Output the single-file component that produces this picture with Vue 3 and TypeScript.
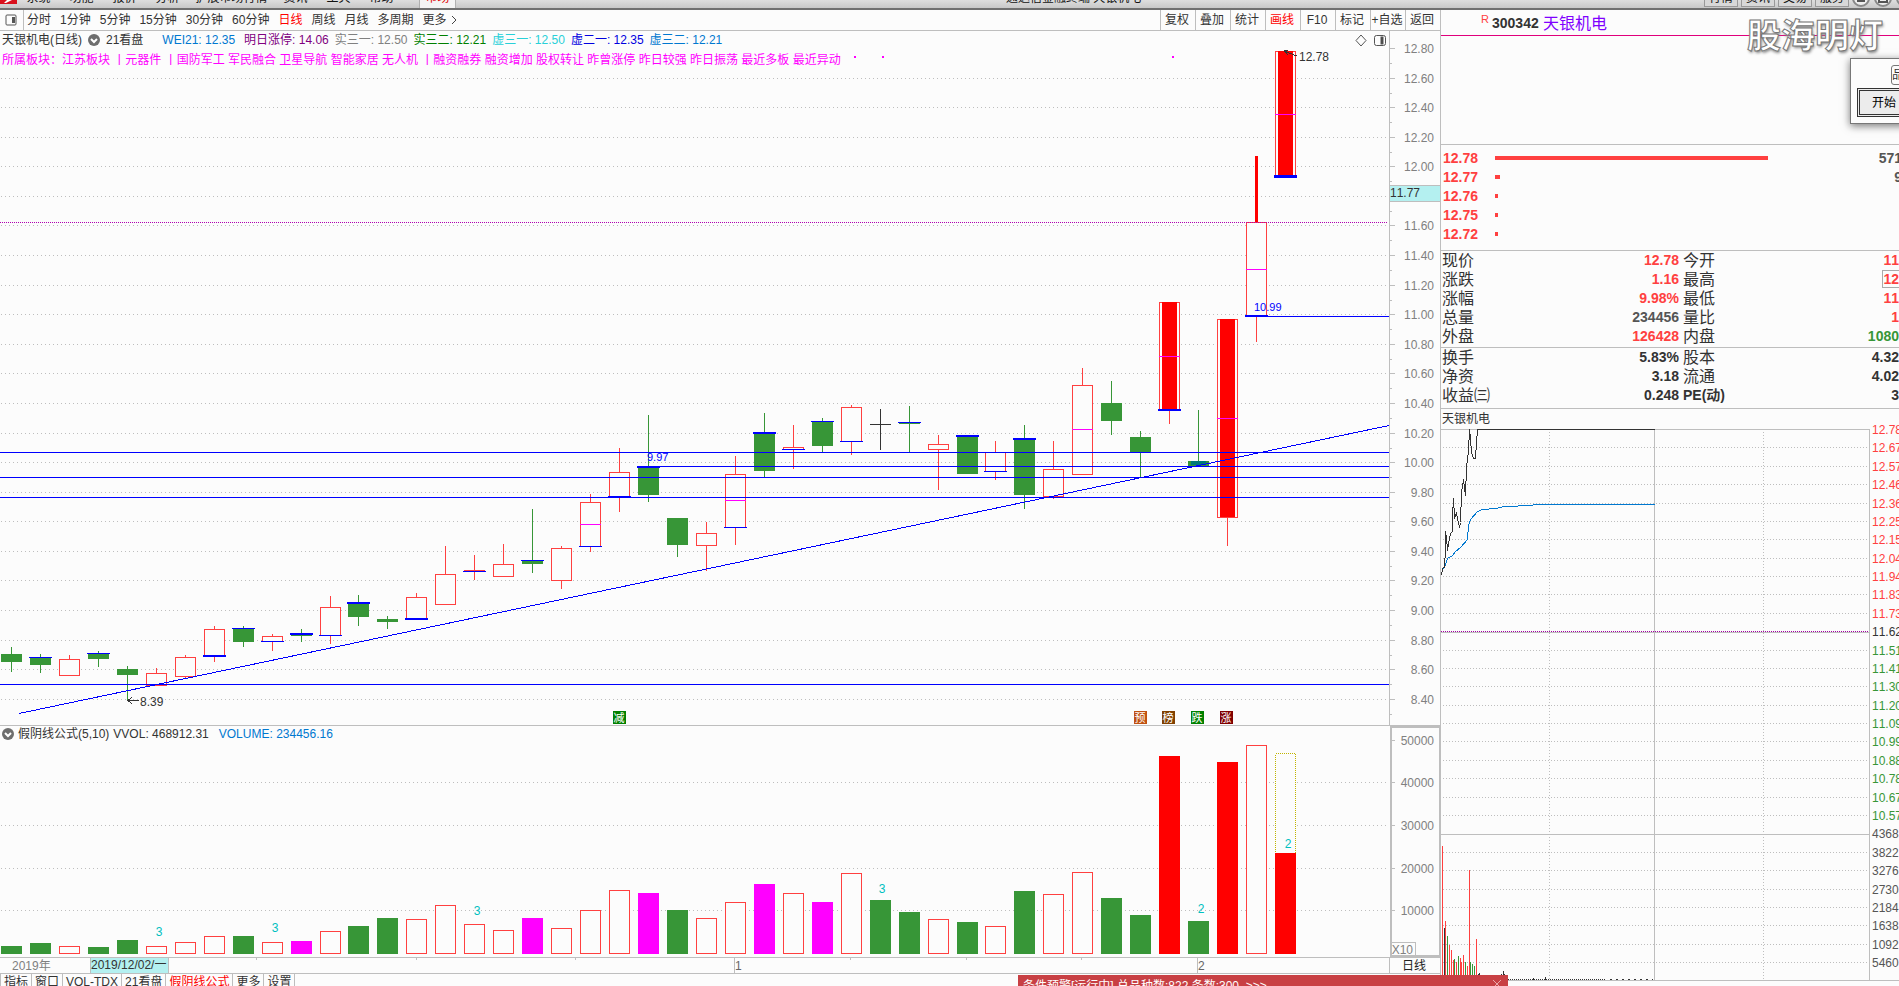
<script setup lang="ts">
type Kind = 'up' | 'down' | 'flat' | 'surge' | 'dip'
interface Mark { y: number; thick?: boolean }
interface Candle {
  kind: Kind
  top: number
  bottom: number
  high: number
  low: number
  mark?: Mark
  mid?: number
}

const STEP = 28.955
const left = (i: number) => Math.round(1 + STEP * i)

const c = (kind: Kind, top: number, bottom: number, high: number, low: number, mark?: Mark, mid?: number): Candle =>
  ({ kind, top, bottom, high, low, mark, mid })
const thin = (y: number): Mark => ({ y })
const thick = (y: number): Mark => ({ y, thick: true })

const candles: Candle[] = [
  c('down', 654, 662, 647, 672),
  c('down', 657, 665, 654, 673, thin(657)),
  c('up', 659, 675, 655, 675),
  c('down', 653, 659, 651, 667, thin(653)),
  c('down', 669, 675, 666, 700),
  c('up', 673, 685, 668, 685),
  c('up', 657, 676, 655, 678),
  c('up', 629, 656, 626, 662, thick(655)),
  c('down', 628, 642, 626, 647, thin(628)),
  c('up', 636, 641, 634, 651, thin(641)),
  c('down', 633, 636, 629, 642, thick(633)),
  c('up', 607, 635, 596, 644, thin(635)),
  c('down', 602, 617, 595, 626, thick(602)),
  c('down', 619, 622, 616, 629),
  c('up', 597, 619, 593, 619, thick(618)),
  c('up', 574, 604, 546, 604),
  c('up', 570, 571, 555, 580, thin(571)),
  c('up', 564, 576, 544, 576),
  c('down', 560, 564, 509, 573, thin(560)),
  c('up', 548, 580, 546, 589),
  c('up', 502, 546, 494, 552, thin(546), 524),
  c('up', 472, 497, 448, 512, thick(496)),
  c('down', 467, 495, 415, 502, thick(466)),
  c('down', 518, 545, 518, 557),
  c('up', 533, 545, 522, 571),
  c('up', 474, 527, 456, 545, thin(527), 500),
  c('down', 433, 471, 413, 477, thick(432)),
  c('up', 447, 449, 425, 469, thin(449)),
  c('down', 421, 446, 418, 452, thin(421)),
  c('up', 407, 441, 405, 455, thin(441)),
  c('flat', 424, 425, 409, 450),
  c('down', 422, 424, 406, 452, thin(422)),
  c('up', 444, 449, 435, 490),
  c('down', 435, 474, 435, 474, thick(435)),
  c('up', 452, 471, 441, 480, thin(471)),
  c('down', 439, 495, 425, 509, thick(438)),
  c('up', 469, 496, 441, 499),
  c('up', 385, 474, 368, 474, undefined, 429),
  c('down', 403, 421, 381, 435),
  c('down', 437, 453, 431, 477),
  c('surge', 302, 410, 302, 424, thick(409), 356),
  c('dip', 461, 466, 410, 466),
  c('surge', 319, 517, 319, 546, undefined, 418),
  c('up', 222, 316, 222, 342, thick(315), 269),
  c('surge', 51, 175, 51, 175, thick(175), 114),
]

const volumes: [string, number][] = [
  ['g', 946], ['g', 943], ['r', 946], ['g', 947], ['g', 940], ['r', 946], ['r', 942], ['r', 936],
  ['g', 936], ['r', 942], ['m', 941], ['r', 931], ['g', 926], ['g', 918], ['r', 919], ['r', 905],
  ['r', 924], ['r', 930], ['m', 918], ['r', 928], ['r', 910], ['r', 890], ['m', 893], ['g', 910],
  ['r', 918], ['r', 902], ['m', 884], ['r', 893], ['m', 902], ['r', 873], ['g', 900], ['g', 912],
  ['r', 919], ['g', 922], ['r', 926], ['g', 891], ['r', 894], ['r', 872], ['g', 898], ['g', 915],
  ['s', 756], ['g', 921], ['s', 762], ['r', 745], ['s', 853],
]

const counts = [
  { x: 159, y: 936, t: '3' }, { x: 275, y: 932, t: '3' }, { x: 477, y: 915, t: '3' },
  { x: 882, y: 893, t: '3' }, { x: 1201, y: 913, t: '2' }, { x: 1288, y: 848, t: '2' },
]

const prices = Array.from({ length: 23 }, (_, i) => ({
  label: (12.8 - i * 0.2).toFixed(2),
  y: Math.round(48 + i * 29.58),
}))
const volTicks = [
  { label: '50000', y: 740 }, { label: '40000', y: 782 }, { label: '30000', y: 825 },
  { label: '20000', y: 868 }, { label: '10000', y: 910 },
]
const support = [452, 477, 497, 684]

const badges = [
  { x: 613, t: '减', color: '#008000' },
  { x: 1134, t: '预', color: '#c05010' },
  { x: 1162, t: '榜', color: '#804000' },
  { x: 1191, t: '跌', color: '#008000' },
  { x: 1220, t: '涨', color: '#800000' },
]

const menus = ['系统', '功能', '报价', '分析', '扩展市场行情', '资讯', '工具', '帮助']
const services = ['行情', '资讯', '交易', '服务']
const periods = ['分时', '1分钟', '5分钟', '15分钟', '30分钟', '60分钟', '日线', '周线', '月线', '多周期']
const tools = ['复权', '叠加', '统计', '画线', 'F10', '标记', '+自选', '返回']
const tabs = ['指标', '窗口', 'VOL-TDX', '21看盘', '假阴线公式', '更多', '设置']

const indicators = [
  { t: 'WEI21: 12.35', cls: 'sky first' },
  { t: '明日涨停: 14.06', cls: 'plum' },
  { t: '实三一: 12.50', cls: 'gray' },
  { t: '实三二: 12.21', cls: 'green' },
  { t: '虚三一: 12.50', cls: 'cyan' },
  { t: '虚二一: 12.35', cls: 'blue' },
  { t: '虚三二: 12.21', cls: 'sky' },
]
const sectors = [
  '所属板块：江苏板块', '丨元器件', '丨国防军工', '军民融合', '卫星导航', '智能家居', '无人机', '丨融资融券',
  '融资增加', '股权转让', '昨曾涨停', '昨日较强', '昨日振荡', '最近多板', '最近异动',
].join(' ')

const book = [
  { p: '12.78', w: 273, v: '571' },
  { p: '12.77', w: 5, v: '9' },
  { p: '12.76', w: 3, v: '' },
  { p: '12.75', w: 3, v: '' },
  { p: '12.72', w: 3, v: '' },
]
interface Quote { a: string; av: string; ac: string; b: string; bv: string; bc: string; box?: boolean }
const quotes: Quote[][] = [
  [
    { a: '现价', av: '12.78', ac: 'red', b: '今开', bv: '11', bc: 'red' },
    { a: '涨跌', av: '1.16', ac: 'red', b: '最高', bv: '12', bc: 'red', box: true },
    { a: '涨幅', av: '9.98%', ac: 'red', b: '最低', bv: '11', bc: 'red' },
    { a: '总量', av: '234456', ac: 'dim', b: '量比', bv: '1', bc: 'red' },
    { a: '外盘', av: '126428', ac: 'red', b: '内盘', bv: '1080', bc: 'leaf' },
  ],
  [
    { a: '换手', av: '5.83%', ac: 'ink', b: '股本', bv: '4.32', bc: 'ink' },
    { a: '净资', av: '3.18', ac: 'ink', b: '流通', bv: '4.02', bc: 'ink' },
    { a: '收益㈢', av: '0.248', ac: 'ink', b: 'PE(动)', bv: '3', bc: 'ink' },
  ],
]

const dayLabels = [
  '12.78', '12.67', '12.57', '12.46', '12.36', '12.25', '12.15', '12.04', '11.94', '11.83', '11.73', '11.62',
  '11.51', '11.41', '11.30', '11.20', '11.09', '10.99', '10.88', '10.78', '10.67', '10.57',
  '4368', '3822', '3276', '2730', '2184', '1638', '1092', '5460',
].map((label, i) => ({
  label,
  y: Math.round(429 + i * 18.38),
  cls: i < 11 ? 'f-red' : i === 11 ? 'f-ink' : i < 22 ? 'f-leaf' : 'f-dim',
}))

const priceLine =
  '1441,575 1442,568 1443,567 1444,567 1445,548 1445,531 1446,537 1447,550 1449,538 1450,533 1452,531 1452,515 1453,498 1454,517 1456,513 1457,518 1459,527 1460,522 1461,492 1463,479 1464,487 1465,495 1466,467 1468,450 1469,429 1470,438 1471,452 1473,458 1475,458 1476,442 1477,429 1654,429'
const avgLine =
  '1442,569 1444,567 1447,558 1452,555 1455,551 1460,547 1467,539 1468,525 1470,519 1477,511 1482,509 1495,508 1504,506 1532,505 1533,504 1654,504'

const dayVol: [number, number, string][] = [
  [1442, 846, 'r'], [1444, 928, 'k'], [1445, 921, 'r'], [1447, 936, 'g'], [1449, 945, 'r'], [1451, 950, 'r'],
  [1453, 960, 'r'], [1454, 959, 'g'], [1456, 962, 'r'], [1458, 956, 'g'], [1460, 958, 'r'], [1461, 962, 'r'],
  [1463, 955, 'r'], [1465, 962, 'g'], [1467, 966, 'r'], [1469, 870, 'r'], [1470, 962, 'g'], [1472, 964, 'g'],
  [1474, 966, 'g'], [1476, 939, 'r'], [1478, 974, 'k'], [1479, 973, 'k'], [1501, 974, 'k'], [1503, 971, 'k'],
  [1504, 974, 'k'], [1533, 978, 'k'], [1545, 977, 'k'],
]
</script>

<template>
  <div class="app">
    <header class="topbar">
      <svg class="logo" viewBox="0 0 17 8" aria-hidden="true">
        <rect width="17" height="4" fill="#d8101c" />
        <path d="M4 3 L7 0 H12 L8 2 L6 3 Z" fill="#fff" />
      </svg>
      <nav class="menus">
        <button v-for="m in menus" :key="m" type="button" :class="{ wide: m.length > 2 }">{{ m }}</button>
        <button type="button" class="market">市场</button>
      </nav>
      <span class="apptitle">通达信金融终端 天银机电</span>
      <div class="services">
        <button v-for="s in services" :key="s" type="button">{{ s }}</button>
      </div>
      <svg class="winbtns" viewBox="0 0 50 8" aria-hidden="true">
        <g fill="#eee" stroke="#888" stroke-width="2">
          <circle cx="12" cy="-2" r="8" /><circle cx="34" cy="-2" r="8" /><circle cx="56" cy="-2" r="8" />
        </g>
        <path d="M8 1 H16 M30 -2 V2 H38 V-2" fill="none" stroke="#555" stroke-width="2" />
      </svg>
    </header>

    <main class="workspace">
      <section class="left">
        <div class="toolbar">
          <button type="button" class="panelbtn" aria-label="侧栏">
            <svg width="12" height="12" viewBox="0 0 12 12">
              <rect x="1" y="1" width="10" height="10" rx="1" fill="none" stroke="#555" />
              <rect x="7" y="3" width="3" height="6" fill="#555" />
            </svg>
          </button>
          <div class="periods">
            <button v-for="p in periods" :key="p" type="button" :class="{ on: p === '日线' }">{{ p }}</button>
            <button type="button" class="more">更多
              <svg width="6" height="10" viewBox="0 0 6 10"><path d="M1 1 L5 5 L1 9" fill="none" stroke="#444" /></svg>
            </button>
          </div>
          <div class="tools">
            <button v-for="t in tools" :key="t" type="button" :class="{ on: t === '画线' }">{{ t }}</button>
          </div>
        </div>

        <div class="pane">
          <div class="overlay">
            <div class="info">
              <span>天银机电(日线)</span>
              <svg class="drop" width="12" height="12" viewBox="0 0 12 12">
                <circle cx="6" cy="6" r="6" fill="#6e6e6e" />
                <path d="M3 5 L6 8 L9 5" fill="none" stroke="#fff" stroke-width="2" />
              </svg>
              <span class="formula">21看盘</span>
              <span v-for="n in indicators" :key="n.t" :class="n.cls">{{ n.t }}</span>
            </div>
            <div class="sectors">{{ sectors }}</div>
          </div>
          <svg class="chart" viewBox="0 31 1440 694" shape-rendering="crispEdges">
            <g class="grid">
              <line v-for="p in prices.slice(1)" :key="p.label" x1="1" x2="1387" :y1="p.y + 0.5" :y2="p.y + 0.5" />
            </g>
            <g fill="#ff00ff">
              <rect x="854" y="56" width="2" height="2" /><rect x="882" y="56" width="2" height="2" /><rect x="1172" y="56" width="2" height="2" />
            </g>

            <g v-for="(k, i) in candles" :key="i" :class="k.kind">
              <line v-if="k.high < k.top" class="wick" :x1="left(i) + 10.5" :x2="left(i) + 10.5" :y1="k.high" :y2="k.top" />
              <line v-if="k.low > k.bottom" class="wick" :x1="left(i) + 10.5" :x2="left(i) + 10.5" :y1="k.bottom" :y2="k.low" />
              <rect v-if="k.kind === 'up' || k.kind === 'surge'" class="body" :x="left(i) + 0.5" :y="k.top + 0.5" width="20" :height="k.bottom - k.top" />
              <rect v-else class="body" :x="left(i)" :y="k.top" width="21" :height="k.bottom - k.top" />
              <rect v-if="k.kind === 'surge'" :x="left(i) + 3" :y="k.top" width="15" :height="k.bottom - k.top" fill="#f00" />
              <rect v-if="k.kind === 'dip'" :x="left(i) + 3" :y="k.top" width="15" height="4" fill="#007878" />
              <rect v-if="k.mid" :x="left(i)" :y="k.mid" width="21" height="1" fill="#f0f" />
              <rect v-if="k.mark" :x="left(i) - 1" :y="k.mark.y" width="23" :height="k.mark.thick ? 2 : 1" fill="#00f" />
            </g>
            <rect x="1274" y="175" width="23" height="3" fill="#00f" />
            <rect x="1255" y="156" width="3" height="66" fill="#f00" />

            <line class="last" x1="0" x2="1388" y1="222.5" y2="222.5" />
            <g stroke="#00f">
              <line v-for="y in support" :key="y" x1="0" x2="1389" :y1="y + 0.5" :y2="y + 0.5" />
              <line x1="638" x2="1389" y1="466.5" y2="466.5" />
              <line x1="1245" x2="1389" y1="316.5" y2="316.5" />
              <line x1="19" x2="1389" y1="713.5" y2="425.5" />
            </g>

            <g class="note">
              <text x="1299" y="61">12.78</text>
              <text x="140" y="706">8.39</text>
            </g>
            <g class="level">
              <text x="1254" y="311">10.99</text>
              <text x="647" y="461">9.97</text>
            </g>
            <g fill="none" stroke="#333">
              <path d="M139 700.5 H128 M132 697 L128 700.5 L132 704" />
              <path d="M1297 56 L1284 51 M1288 50 H1284 L1288 55" />
            </g>

            <g v-for="b in badges" :key="b.t">
              <rect :x="b.x" y="711" width="13" height="13" :fill="b.color" />
              <text class="badge" :x="b.x + 6" y="722">{{ b.t }}</text>
            </g>

            <g class="axis">
              <line x1="1389.5" x2="1389.5" y1="31" y2="725" />
              <template v-for="p in prices" :key="p.label">
                <line x1="1390" x2="1395" :y1="p.y + 0.5" :y2="p.y + 0.5" />
                <line x1="1390" x2="1392" :y1="p.y + 15.5" :y2="p.y + 15.5" />
                <text v-if="p.label !== '11.80'" x="1434" :y="p.y + 5">{{ p.label }}</text>
              </template>
              <rect x="1389.5" y="185.5" width="51" height="16" fill="#b4f0f0" />
            </g>
            <text class="cursor" x="1390" y="197">11.77</text>
            <g fill="none" stroke="#555" shape-rendering="auto">
              <path d="M1361 35 L1366 40.5 L1361 46 L1356 40.5 Z" />
              <rect x="1374.5" y="35.5" width="11" height="10" rx="2" />
              <rect x="1381" y="37" width="2" height="7" fill="#444" />
            </g>
          </svg>
        </div>

        <div class="pane vol">
          <div class="overlay info">
            <svg class="drop" width="12" height="12" viewBox="0 0 12 12">
              <circle cx="6" cy="6" r="6" fill="#6e6e6e" />
              <path d="M3 5 L6 8 L9 5" fill="none" stroke="#fff" stroke-width="2" />
            </svg>
            <span>假阴线公式(5,10)</span>
            <span class="vvol">VVOL: 468912.31</span>
            <span class="sky">VOLUME: 234456.16</span>
          </div>
          <svg class="chart" viewBox="0 726 1440 231" shape-rendering="crispEdges">
            <g class="grid">
              <line v-for="t in volTicks.slice(1)" :key="t.label" x1="1" x2="1387" :y1="t.y + 0.5" :y2="t.y + 0.5" />
            </g>
            <rect x="1275.5" y="753.5" width="20" height="100" fill="#fcfcfc" stroke="#c0b400" stroke-dasharray="1 1" />
            <template v-for="([k, y], i) in volumes" :key="i">
              <rect v-if="k === 'r'" :x="left(i) + 0.5" :y="y + 0.5" width="20" :height="953 - y" fill="#fcfcfc" stroke="#ff4040" />
              <rect v-else :class="'v-' + k" :x="left(i)" :y="y" width="21" :height="954 - y" />
            </template>
            <text v-for="n in counts" :key="n.x" class="count" :x="n.x" :y="n.y">{{ n.t }}</text>
            <g class="axis">
              <rect x="1391" y="727" width="49" height="229" fill="none" stroke-width="2" />
              <template v-for="t in volTicks" :key="t.label">
                <line x1="1390" x2="1395" :y1="t.y + 0.5" :y2="t.y + 0.5" />
                <line x1="1390" x2="1392" :y1="t.y + 21.5" :y2="t.y + 21.5" />
                <text x="1434" :y="t.y + 5">{{ t.label }}</text>
              </template>
              <rect x="1391.5" y="942.5" width="24" height="13" fill="none" />
              <text x="1413" y="954">X10</text>
            </g>
          </svg>
        </div>

        <svg class="chart dates" viewBox="0 957 1440 17" shape-rendering="crispEdges">
          <g stroke="#bebebe">
            <line x1="0" x2="1440" y1="957.5" y2="957.5" />
            <line x1="0" x2="1440" y1="973.5" y2="973.5" />
            <line x1="1389.5" x2="1389.5" y1="957" y2="973" />
            <line x1="734.5" x2="734.5" y1="957" y2="973" />
            <line x1="1197.5" x2="1197.5" y1="957" y2="973" />
            <line v-for="x in [256, 416, 575, 850, 966, 1081]" :key="x" :x1="x + 0.5" :x2="x + 0.5" y1="958" y2="960" />
            <rect x="90.5" y="957.5" width="78" height="16" fill="#b4f0f0" />
          </g>
          <text x="12" y="970" fill="#808080">2019年</text>
          <text x="91" y="969" fill="#333">2019/12/02/一</text>
          <text x="735" y="970" fill="#666">1</text>
          <text x="1198" y="970" fill="#666">2</text>
          <text x="1402" y="970" fill="#222">日线</text>
        </svg>

        <div class="tabs">
          <button v-for="t in tabs" :key="t" type="button" :class="{ on: t === '假阴线公式' }">{{ t }}</button>
        </div>
      </section>

      <aside class="right">
        <div class="stock"><sup>R</sup><b>300342</b><span>天银机电</span></div>
        <div class="blank"></div>
        <table class="book">
          <tbody>
            <tr v-for="b in book" :key="b.p">
              <th scope="row">{{ b.p }}</th>
              <td><div class="bar" :style="{ width: b.w + 'px' }"></div></td>
              <td class="qty">{{ b.v }}</td>
            </tr>
          </tbody>
        </table>
        <table v-for="(g, i) in quotes" :key="i" class="quotes">
          <tbody>
            <tr v-for="q in g" :key="q.a">
              <th scope="row">{{ q.a }}</th>
              <td :class="q.ac">{{ q.av }}</td>
              <th scope="row" class="second" :class="{ pe: q.b.startsWith('PE') }">{{ q.b }}</th>
              <td :class="q.bc"><span :class="{ box: q.box }">{{ q.bv }}</span></td>
            </tr>
          </tbody>
        </table>
        <div class="daytitle">天银机电</div>
        <svg class="day" viewBox="1441 429 458 557" shape-rendering="crispEdges">
          <g class="daygrid">
            <template v-for="(l, i) in dayLabels" :key="l.label">
              <line v-if="i !== 0 && i !== 11 && i !== 22" x1="1443" x2="1868" :y1="l.y + 0.5" :y2="l.y + 0.5" />
            </template>
            <line x1="1549.5" x2="1549.5" y1="432" y2="980" /><line x1="1763.5" x2="1763.5" y1="432" y2="980" />
          </g>
          <g stroke="#bebebe">
            <line x1="1441" x2="1870" y1="429.5" y2="429.5" />
            <line x1="1441" x2="1870" y1="632.5" y2="632.5" />
            <line x1="1441" x2="1870" y1="834.5" y2="834.5" />
            <line x1="1441" x2="1899" y1="980.5" y2="980.5" />
            <line x1="1654.5" x2="1654.5" y1="429" y2="980" />
            <line x1="1869.5" x2="1869.5" y1="429" y2="980" />
          </g>
          <line x1="1441" x2="1869" y1="631.5" y2="631.5" stroke="#a000a0" stroke-dasharray="1 1" />
          <rect v-for="([x, y, k], i) in dayVol" :key="i" :class="'d-' + k" :x="x" :y="y" width="1" :height="980 - y" />
          <line x1="1508" x2="1606" y1="979.5" y2="979.5" stroke="#333" stroke-dasharray="1 1" />
          <line x1="1610" x2="1653" y1="979.5" y2="979.5" stroke="#333" stroke-dasharray="2 4" />
          <g transform="translate(0.5 0.5)" fill="none">
            <polyline :points="avgLine" stroke="#0078d0" />
            <polyline :points="priceLine" stroke="#333" />
          </g>
          <text v-for="l in dayLabels" :key="l.label" :class="l.cls" x="1872" :y="l.y + 5">{{ l.label }}</text>
        </svg>
      </aside>
    </main>

    <div class="watermark">股海明灯</div>
    <div class="dialog">
      <span class="chip">品</span>
      <button type="button">开始</button>
    </div>
    <div class="toast">
      <span>条件预警[运行中] 总品种数:822 条数:300&nbsp; &gt;&gt;&gt;</span>
      <button type="button" aria-label="关闭">
        <svg width="10" height="10" viewBox="0 0 10 10"><path d="M1 1 L9 9 M9 1 L1 9" stroke="#eba8aa" /></svg>
      </button>
    </div>
  </div>
</template>

<style>
html, body { margin: 0; overflow: hidden; }
</style>

<style scoped>
.app {
  position: relative;
  height: 100vh;
  overflow: hidden;
  background: #fcfcfc;
  color: #333;
  font: 12px/18px "Liberation Sans", "Noto Sans CJK SC", sans-serif;
  font-kerning: none;
  white-space: nowrap;
}
button {
  flex: none;
  padding: 0;
  border: 0;
  background: none;
  color: inherit;
  font: inherit;
  white-space: nowrap;
}
svg { display: block; flex: none; }

.topbar {
  box-sizing: border-box;
  position: relative;
  display: flex;
  align-items: flex-end;
  height: 10px;
  overflow: hidden;
  border-bottom: 2px solid #707070;
  background: linear-gradient(#dedede, #c8c8c8);
  color: #111;
  line-height: 14px;
}
.logo { width: 17px; height: 8px; }
.menus { display: flex; align-items: flex-end; }
.menus button { width: 43px; padding-bottom: 3px; text-align: center; }
.menus .wide { width: 85px; }
.menus .market {
  width: 37px;
  margin-left: 16px;
  padding-bottom: 3px;
  border: 1px solid #b0b0b0;
  border-width: 0 1px;
  background: #f4f4f4;
  color: #e00000;
}
.apptitle { margin-left: 550px; padding-bottom: 3px; }
.services { display: flex; gap: 3px; margin-left: auto; padding-bottom: 1px; }
.services button { box-sizing: border-box; width: 34px; padding-bottom: 1px; border: 1px solid #999; background: #d8d8d8; }
.winbtns { width: 50px; height: 8px; overflow: hidden; }

.workspace { display: grid; grid-template-columns: 1440fr 459fr; }
.left { min-width: 0; }
.chart { width: 100%; height: auto; }
.chart text, .day text { font-size: 12px; }

.toolbar {
  display: flex;
  height: 20px;
  border-bottom: 1px solid #bebebe;
  line-height: 20px;
}
.panelbtn { display: flex; align-items: center; width: 24px; padding-left: 5px; box-sizing: border-box; border-right: 1px solid #bebebe; }
.periods { display: flex; gap: 9px; padding-left: 3px; }
.periods .on, .tools .on, .tabs .on { color: #f00; }
.more { display: flex; align-items: center; gap: 4px; }
.tools { display: flex; margin-left: auto; }
.tools button { box-sizing: border-box; width: 35px; padding-right: 2px; border-left: 1px solid #bebebe; text-align: center; }

.pane { position: relative; }
.vol { border-top: 1px solid #bebebe; }
.overlay { position: absolute; top: 0; left: 0; }
.info { display: flex; align-items: center; gap: 6px; padding-left: 2px; }
.info .formula { margin-right: 13px; }
.info .first { margin-right: 3px; }
.vol .info { gap: 4px; line-height: 16px; }
.vvol { margin-right: 6px; }
.sectors { padding-left: 2px; color: #f0f; line-height: 22px; }
.sky { color: #0078d0; }
.plum { color: #800080; }
.gray { color: #808080; }
.green { color: #008000; }
.cyan { color: #28d0d8; }
.blue { color: #0000e0; }

.grid line { stroke: #bebebe; stroke-dasharray: 1 3; }
.up .wick, .surge .wick { stroke: #ff4040; }
.down .wick, .dip .wick { stroke: #379637; }
.flat .wick { stroke: #333; }
.up .body, .surge .body { fill: #fcfcfc; stroke: #ff4040; }
.down .body, .dip .body { fill: #379637; }
.flat .body { fill: #333; }
.last { stroke: #b000b0; stroke-dasharray: 1 1; }
.note text { fill: #333; }
.chart .level text { fill: #00f; font-size: 11px; }
.chart .badge { fill: #fff; font-size: 11px; text-anchor: middle; }
.axis line, .axis rect { stroke: #bebebe; }
.axis text { fill: #808080; text-anchor: end; }
.cursor { fill: #333; }
.v-g { fill: #379637; }
.v-m { fill: #f0f; }
.v-s { fill: #f00; }
.count { fill: #00c0c0; text-anchor: middle; }

.tabs { display: flex; border-left: 1px solid #bebebe; line-height: 16px; }
.tabs button { padding: 0 3px; border-right: 1px solid #bebebe; }

.right { position: relative; min-width: 0; border-left: 1px solid #bebebe; }
.stock {
  display: flex;
  height: 25px;
  border-bottom: 1px solid #e0007c;
  padding-left: 40px;
  line-height: 27px;
}
.stock sup { width: 11px; color: #ff4040; font-size: 11px; line-height: 19px; }
.stock b { width: 51px; font-size: 14px; }
.stock span { color: #8000ff; font-size: 16px; }
.blank { height: 108px; border-bottom: 1px solid #bebebe; }
table { width: 100%; border-collapse: collapse; table-layout: fixed; }
th, td { height: 19px; padding: 0; line-height: 19px; }
.book { width: calc(100% + 3px); margin: 4px 0 6px; }
.book th { width: 54px; padding-left: 2px; box-sizing: border-box; color: #ff4040; font-size: 14px; text-align: left; }
.bar { height: 4px; margin-bottom: 2px; background: #ff4040; }
.book .qty { width: 60px; }
.qty, .quotes td { color: #555; font-size: 14px; font-weight: bold; text-align: right; }
.quotes { margin-bottom: 1px; border-top: 1px solid #bebebe; }
.quotes:last-of-type { margin-bottom: 3px; }
.quotes th { width: 80px; padding-left: 1px; box-sizing: border-box; font-size: 16px; font-weight: normal; text-align: left; }
.quotes td:nth-child(2) { width: 158px; }
.quotes .second { width: 85px; padding-left: 4px; }
.quotes .red { color: #ff4040; }
.quotes .dim { color: #555; }
.quotes .leaf { color: #379637; }
.quotes .ink { color: #333; }
.quotes .pe { font-size: 14px; font-weight: bold; }
.box { outline: 1px solid #aaa; }
.daytitle { height: 20px; border-top: 1px solid #bebebe; padding-left: 1px; line-height: 20px; }
.day { width: 100%; height: auto; overflow: visible; }
.daygrid line { stroke: #bebebe; stroke-dasharray: 1 2; }
.d-r { fill: #ff4040; }
.d-g { fill: #379637; }
.d-k { fill: #333; }
.f-red { fill: #ff4040; }
.f-ink { fill: #333; }
.f-leaf { fill: #379637; }
.f-dim { fill: #555; }

.watermark {
  position: absolute;
  top: 12px;
  right: 16px;
  color: #fff;
  font-size: 34px;
  font-weight: bold;
  line-height: 48px;
  -webkit-text-stroke: 1px #777;
  text-shadow: 1px 2px 3px #888;
}
.dialog {
  box-sizing: border-box;
  position: absolute;
  top: 58px;
  right: -60px;
  width: 109px;
  height: 66px;
  padding: 6px;
  border: 1px solid #777;
  background: #fcfcfc;
  box-shadow: 0 2px 8px #777;
}
.chip {
  display: block;
  width: 30px;
  height: 18px;
  margin: 0 0 3px 34px;
  border: 1px solid #777;
  border-radius: 3px;
  line-height: 18px;
}
.dialog button {
  box-sizing: border-box;
  width: 94px;
  height: 29px;
  padding-left: 12px;
  border: 3px double #333;
  background: #ececec;
  color: #000;
  text-align: left;
}
.toast {
  box-sizing: border-box;
  position: absolute;
  left: 1018px;
  bottom: 0;
  display: flex;
  justify-content: space-between;
  width: 490px;
  height: 11px;
  padding: 2px 6px 0 5px;
  overflow: hidden;
  background: #c84044;
  color: #fff;
}
.toast button { align-self: flex-start; padding-top: 2px; }
</style>
